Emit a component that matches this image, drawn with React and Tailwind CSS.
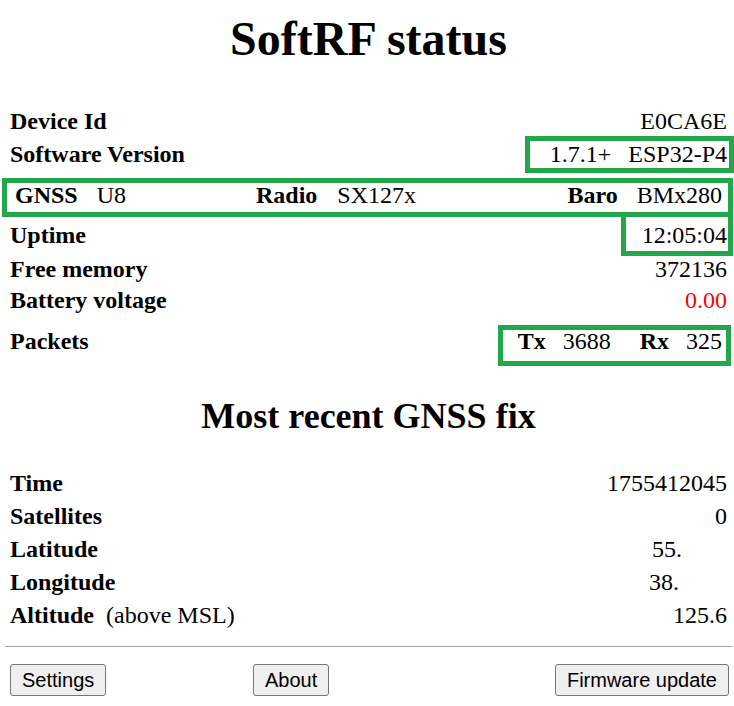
export default function App() {
  const box = "border-[#22a84a]";

  return (
    <div className="min-h-[706px] bg-white pl-[10px] pr-[7px] font-['Liberation_Serif',serif] text-[24px] text-black">
      <h1 className="pt-[12px] text-center text-[48px] font-bold leading-[53px]">SoftRF status</h1>

      <div className="mt-[43px] flex justify-between leading-[27px]">
        <b>Device Id</b>
        <span>E0CA6E</span>
      </div>

      <div className="mt-px flex items-start justify-between">
        <b className="pt-[5px] leading-[27px]">Software Version</b>
        <div className={`-mr-[7px] flex gap-[17px] border-[5px] ${box} pl-[20px] pr-[2px] leading-[27px]`}>
          <span>1.7.1+</span>
          <span>ESP32-P4</span>
        </div>
      </div>

      <div className={`mt-[5px] -ml-[8px] -mr-[6px] grid grid-cols-[241px_1fr_auto] border-[5px] ${box} pl-[8px] pr-[6px] pb-[5px] leading-[24px]`}>
        <div>
          <b>GNSS</b>
          <span className="ml-[19px]">U8</span>
        </div>
        <div>
          <b>Radio</b>
          <span className="ml-[20px]">SX127x</span>
        </div>
        <div>
          <b>Baro</b>
          <span className="ml-[19px]">BMx280</span>
        </div>
      </div>

      <div className="flex items-start justify-between">
        <b className="pt-[5px] leading-[27px]">Uptime</b>
        <div className={`-mr-[6px] border-x-[5px] border-b-[5px] border-t-0 ${box} pt-[5px] pb-[2px] pl-[16px] pr-px leading-[27px]`}>
          12:05:04
        </div>
      </div>

      <div className="flex justify-between leading-[27px]">
        <b>Free memory</b>
        <span>372136</span>
      </div>

      <div className="mt-[4px] flex justify-between leading-[27px]">
        <b>Battery voltage</b>
        <span className="text-[#ff0000]">0.00</span>
      </div>

      <div className="mt-[11px] flex items-start justify-between">
        <b className="pt-[3px] leading-[27px]">Packets</b>
        <div className={`-mr-[4px] flex border-[5px] ${box} pl-[15px] pr-[4px] pb-[9px] leading-[22px]`}>
          <b>Tx</b>
          <span className="ml-[17px]">3688</span>
          <b className="ml-[29px]">Rx</b>
          <span className="ml-[17px]">325</span>
        </div>
      </div>

      <h2 className="mt-[30px] text-center text-[36px] font-bold leading-[40px]">Most recent GNSS fix</h2>

      <div className="mt-[31px] leading-[33px]">
        <div className="flex justify-between">
          <b>Time</b>
          <span>1755412045</span>
        </div>
        <div className="flex justify-between">
          <b>Satellites</b>
          <span>0</span>
        </div>
        <div className="flex justify-between">
          <b>Latitude</b>
          <span className="pr-[45px]">55.</span>
        </div>
        <div className="flex justify-between">
          <b>Longitude</b>
          <span className="pr-[48px]">38.</span>
        </div>
        <div className="flex justify-between">
          <span>
            <b>Altitude</b>
            <span className="ml-[12px]">(above MSL)</span>
          </span>
          <span>125.6</span>
        </div>
      </div>

      <hr className="mt-[14px] -mx-[5px] border-t border-[#a0a0a0]" />

      <div className="mt-[17px] -mr-[2px] grid grid-cols-[243px_1fr_auto] font-['Liberation_Sans',sans-serif] text-[20px] leading-[23px]">
        <div>
          <button className="rounded-[3px] border border-[#767676] bg-[#efefef] px-[11px] py-[3.5px]">Settings</button>
        </div>
        <div>
          <button className="rounded-[3px] border border-[#767676] bg-[#efefef] px-[11px] py-[3.5px]">About</button>
        </div>
        <div>
          <button className="rounded-[3px] border border-[#767676] bg-[#efefef] px-[11px] py-[3.5px]">Firmware update</button>
        </div>
      </div>
    </div>
  );
}
